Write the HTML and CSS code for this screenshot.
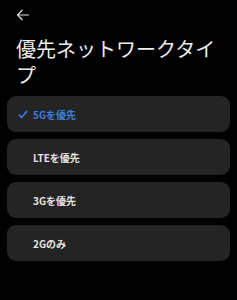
FILE: index.html
```html
<!DOCTYPE html>
<html lang="ja">
<head>
  <meta charset="UTF-8" />
  <meta name="viewport" content="width=device-width, initial-scale=1" />
  <title>優先ネットワークタイプ</title>
  <link rel="stylesheet" href="styles.css">
</head>
<body>

  <div class="screen">
    <div class="topbar">
      <svg class="back" width="14" height="12" viewBox="0 0 14 12">
        <path d="M13 6H1.5M6.5 1L1.5 6L6.5 11" fill="none" stroke="#d8d8d8" stroke-width="1.2" />
      </svg>
    </div>
    <h1 class="title">優先ネットワークタイプ</h1>

    <div class="options">
      <div class="option selected">
        <svg class="check" width="10" height="9" viewBox="0 0 10 9">
          <path d="M1 4.8L3.6 7.6L9 1" fill="none" stroke="#3f7de0" stroke-width="1.6" />
        </svg>
        <span>5Gを優先</span>
      </div>
      <div class="option"><span>LTEを優先</span></div>
      <div class="option"><span>3Gを優先</span></div>
      <div class="option"><span>2Gのみ</span></div>
    </div>
  </div>

</body>
</html>
```

FILE: styles.css
```css
/* Dark settings page */
body {
  margin: 0;
  background-color: #000;
  font-family: "Noto Sans CJK JP", "Noto Sans", sans-serif;
  color: #e6e6e6;
}
.screen {
  width: 237px;
  height: 300px;
}
.topbar {
  height: 28px;
  padding-left: 16px;
  display: flex;
  align-items: center;
}
.back {
  display: block;
  margin-top: 2px;
}
.title {
  margin: 8px 16px 0 16px;
  font-size: 20px;
  font-weight: normal;
  line-height: 26px;
  width: 200px;
  color: #ececec;
}
.options {
  margin: 8px 7px 0 7px;
  display: flex;
  flex-direction: column;
  gap: 7px;
}
.option {
  height: 36px;
  background-color: #242424;
  border-radius: 9px;
  display: flex;
  align-items: center;
  padding-left: 26px;
  position: relative;
  font-size: 10px;
  font-weight: bold;
  color: #e4e4e4;
}
.option.selected {
  color: #3f7de0;
}
.check {
  position: absolute;
  left: 11px;
  top: 14px;
}
```
